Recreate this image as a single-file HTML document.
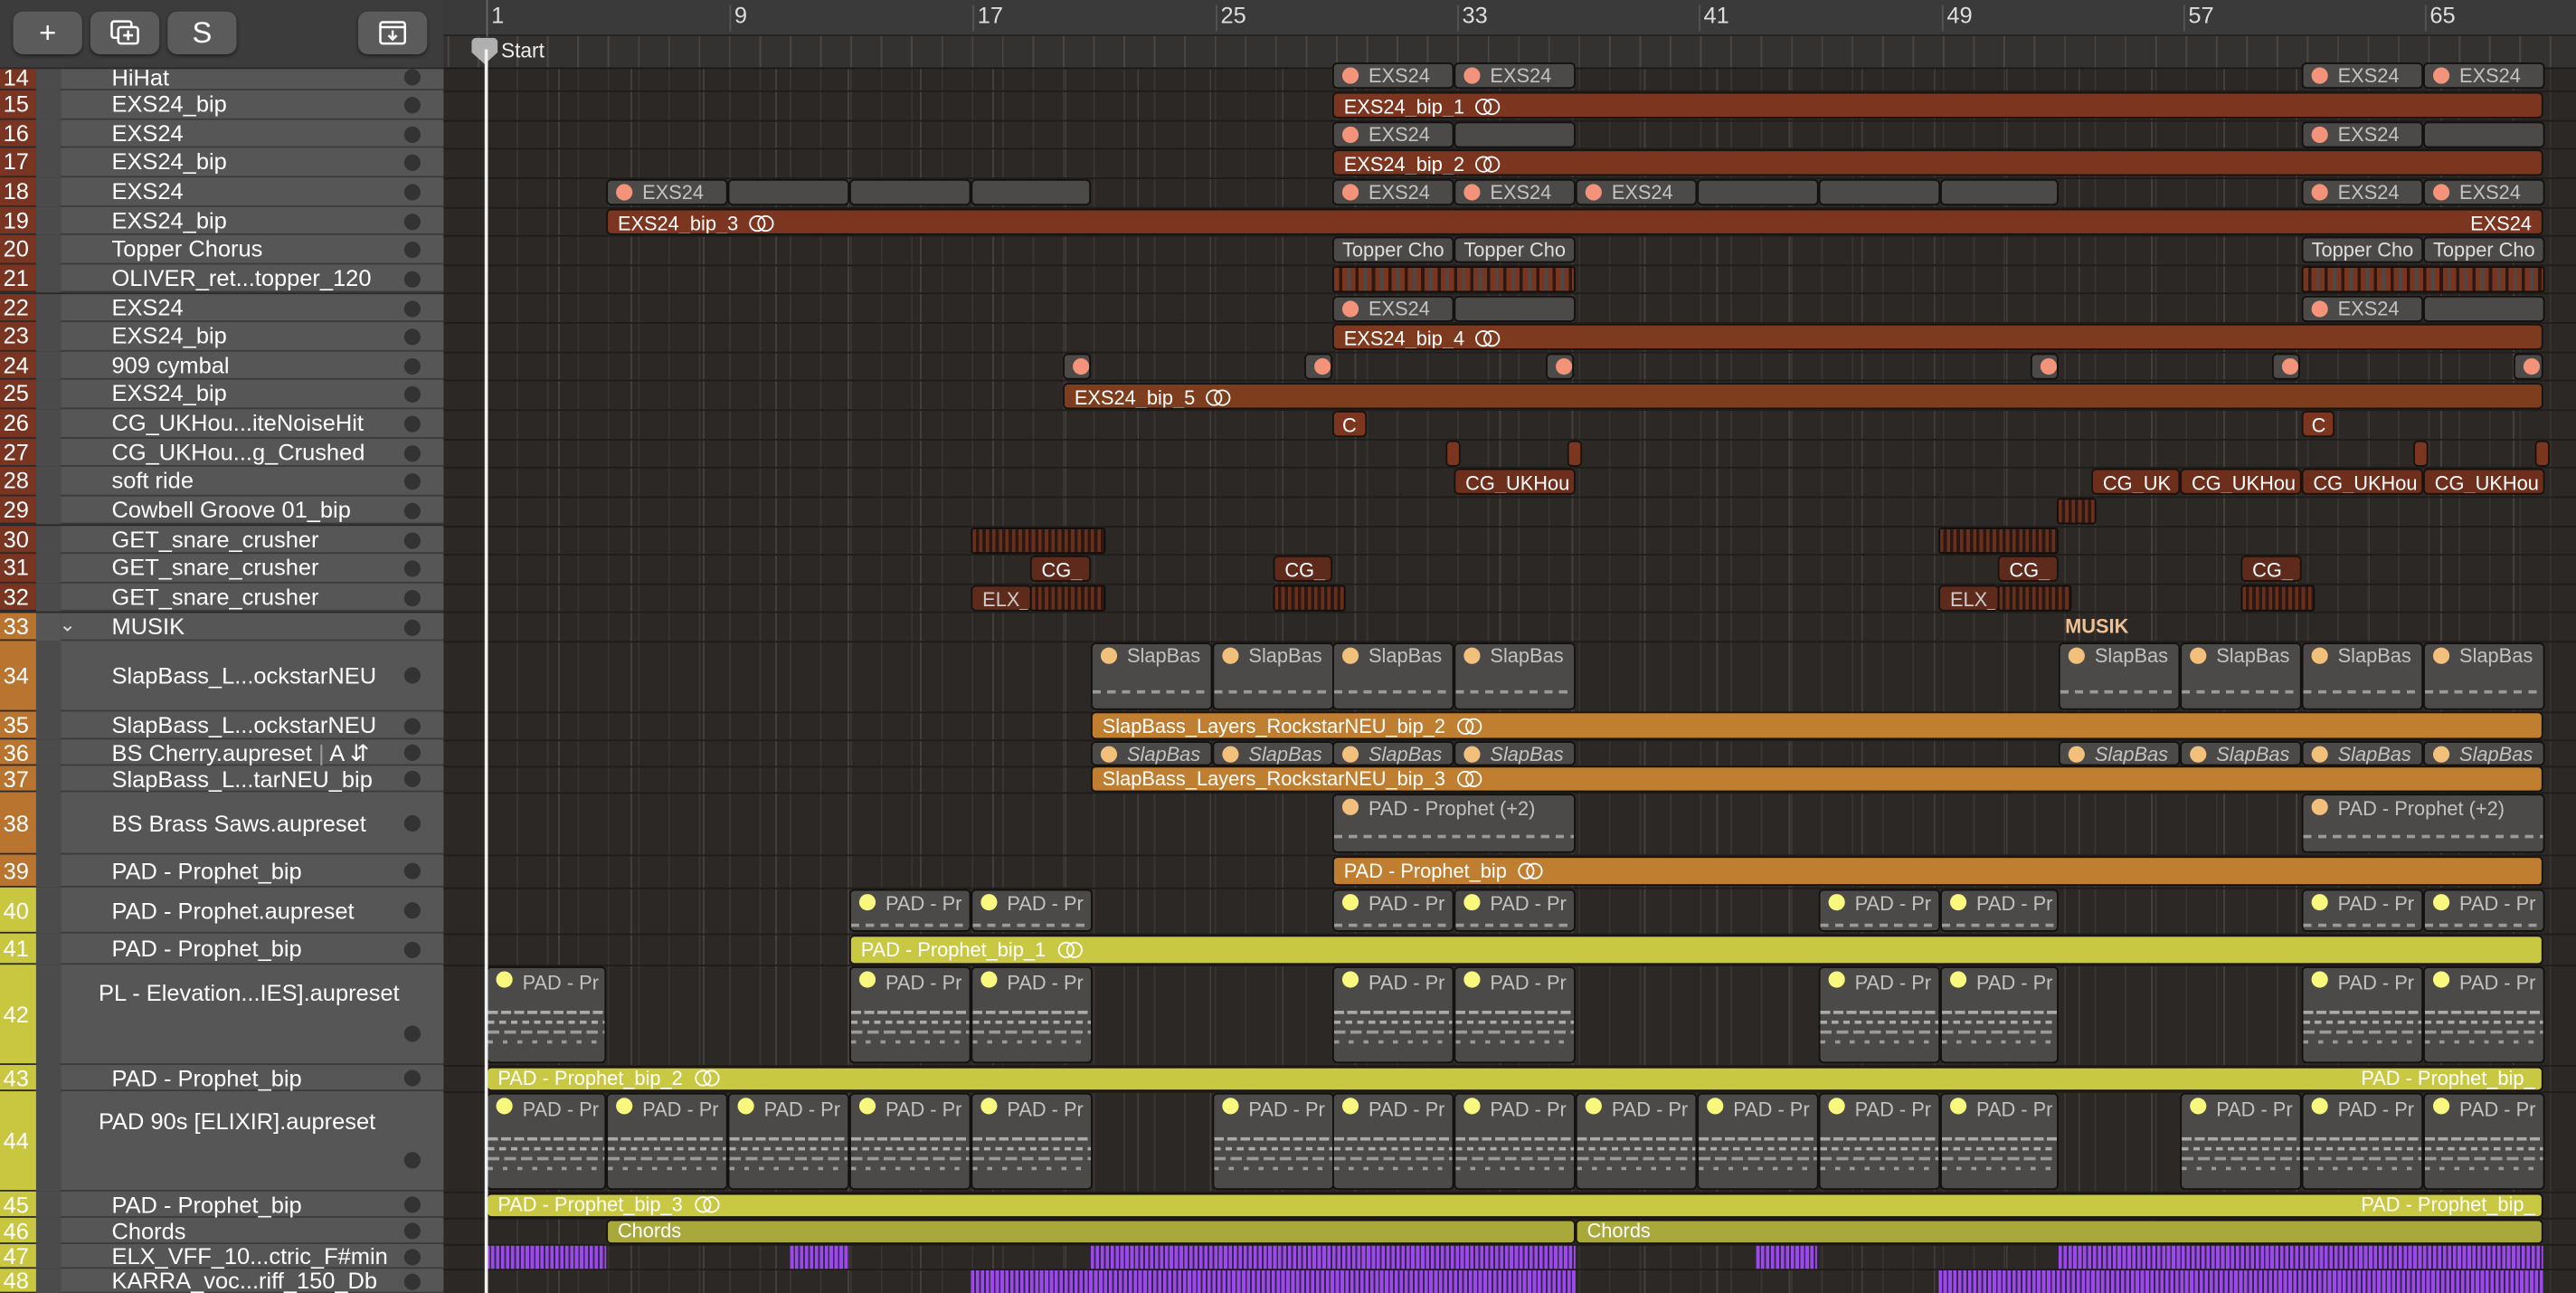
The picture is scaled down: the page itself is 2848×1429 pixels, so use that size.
<!DOCTYPE html>
<html><head><meta charset="utf-8"><style>
html,body{margin:0;padding:0;background:#2c2826;overflow:hidden;width:2848px;height:1428px}
#s{position:absolute;left:0;top:0;width:1568px;height:787px;transform:scale(1.816327);transform-origin:0 0;font-family:"Liberation Sans",sans-serif;overflow:hidden;background:#2c2825}
.a{position:absolute;box-sizing:border-box}
#tl{position:absolute;left:270px;top:42px;width:1298px;height:745px;background:#2c2825;
background-image:repeating-linear-gradient(90deg,transparent 0 25.6px,#45403b 25.6px 26.6px,transparent 26.6px 44.07px);}
.sub{position:absolute;left:296px;top:42px;width:1272px;height:745px;background-image:repeating-linear-gradient(90deg,#3a3531 0 1px,transparent 1px 18.47px)}
.hl{position:absolute;left:270px;width:1298px;height:1px;background:#1f1c1a}
.num{position:absolute;left:0;width:22px;color:#fff;font-size:14px;padding-left:2px;box-sizing:border-box;border-bottom:1px solid #2a2a2a}
.gap{position:absolute;left:22px;width:15px;background:#4b4b4b}
.nm{position:absolute;left:37px;width:233px;background:#565656;border-bottom:1px solid #3b3b3b;box-sizing:border-box;color:#fff;font-size:14px;padding-left:31px;white-space:nowrap}
.nm i{position:absolute;left:209px;width:10px;height:10px;border-radius:50%;background:#333}
.r{position:absolute;box-sizing:border-box;border:1px solid #121110;border-radius:3px;background:#4b4a48;color:#c2c2c2;font-size:12px;overflow:hidden;white-space:nowrap;padding-left:21px;line-height:14px}
.r::before{content:"";position:absolute;left:5px;top:2px;width:10px;height:10px;border-radius:50%;background:var(--d,#f2937a)}
.nd::before{display:none}
.o{--d:#f2c07a}.y{--d:#f8f77e}
.b{position:absolute;box-sizing:border-box;border-radius:3px;color:#fff;font-size:12px;white-space:nowrap;overflow:hidden;padding-left:6px;line-height:16px;border:1px solid #161210}
.br{background:#7c3620}.or{background:#c07e30}.ye{background:#c8c842;color:#3b3b10}.ch{background:#a9a83b;color:#fff}
.lk{display:inline-block;position:relative;width:15px;height:10px;margin-left:7px;vertical-align:-1px}
.lk::before,.lk::after{content:"";position:absolute;top:0;width:8px;height:8px;border:1.3px solid currentColor;border-radius:50%}
.lk::before{left:0}.lk::after{left:5px}
.st{position:absolute;box-sizing:border-box;border:1px solid #120e0c;border-radius:2px;background:repeating-linear-gradient(90deg,#6a2e1c 0 2px,#2a1913 2px 4px)}
.pu{position:absolute;background:repeating-linear-gradient(90deg,#9a4ae8 0 2px,#3a2450 2px 3px)}
.m1{background-image:repeating-linear-gradient(90deg,#9a9a9a 0 5px,transparent 5px 9px);background-size:100% 2px;background-repeat:no-repeat;background-position:0 28px;background-color:#4b4a48}
.m3{background-image:repeating-linear-gradient(90deg,#aaa 0 6px,transparent 6px 8px),repeating-linear-gradient(90deg,#aaa 0 4px,transparent 4px 7px),repeating-linear-gradient(90deg,#999 0 7px,transparent 7px 10px),repeating-linear-gradient(90deg,#999 0 3px,transparent 3px 9px);background-size:100% 2px;background-repeat:no-repeat;background-position:0 26px,0 32px,0 38px,0 44px;background-color:#4b4a48}
.btn{position:absolute;top:7px;height:26px;width:42px;background:#5b5b5b;border-radius:6px;color:#fff;font-size:18px;text-align:center;line-height:26px;box-shadow:0 1px 2px #222}
.rn{position:absolute;top:1px;color:#ddd;font-size:14px}
.tc{background:repeating-linear-gradient(90deg,#7a3520 0 3px,#2a1913 3px 5px,#7a3520 5px 8px,#4b4a48 8px 10px)}
</style></head><body><div id="s">
<div id="tl"></div><div class="sub"></div>
<div class="a" style="left:270px;top:0;width:1298px;height:22px;background:#3a3a3a;border-bottom:1px solid #222"></div>
<div class="a" style="left:270px;top:22px;width:1298px;height:20px;background:#343231;border-bottom:1px solid #1a1a1a;background-image:repeating-linear-gradient(90deg,#4a4643 0 1px,transparent 1px 18.47px);background-position:26px 0"></div>
<div class="a" style="left:296px;top:0;width:1px;height:22px;background:#666"></div>
<div class="rn" style="left:299px">1</div><div class="rn" style="left:447px">9</div><div class="rn" style="left:595px">17</div><div class="rn" style="left:743px">25</div><div class="rn" style="left:890px">33</div><div class="rn" style="left:1037px">41</div><div class="rn" style="left:1185px">49</div><div class="rn" style="left:1332px">57</div><div class="rn" style="left:1479px">65</div>
<div class="a" style="left:444px;top:3px;width:1px;height:16px;background:#555"></div><div class="a" style="left:592px;top:3px;width:1px;height:16px;background:#555"></div><div class="a" style="left:740px;top:3px;width:1px;height:16px;background:#555"></div><div class="a" style="left:887px;top:3px;width:1px;height:16px;background:#555"></div><div class="a" style="left:1034px;top:3px;width:1px;height:16px;background:#555"></div><div class="a" style="left:1182px;top:3px;width:1px;height:16px;background:#555"></div><div class="a" style="left:1329px;top:3px;width:1px;height:16px;background:#555"></div><div class="a" style="left:1476px;top:3px;width:1px;height:16px;background:#555"></div>
<div class="a" style="left:287px;top:23px;width:16px;height:16px;background:#b0b0b0;clip-path:polygon(0 0,100% 0,100% 55%,50% 100%,0 55%);border-radius:3px"></div>
<div class="a" style="left:305px;top:24px;color:#eee;font-size:12.5px">Start</div>
<div class="a" style="left:0;top:0;width:270px;height:42px;background:#3c3c3c;border-bottom:1px solid #2a2a2a"></div>
<div class="btn" style="left:8px">+</div>
<div class="btn" style="left:55px"><svg width="20" height="18" viewBox="0 0 20 18" style="margin-top:4px" fill="none" stroke="#fff" stroke-width="1.4"><rect x="2" y="2" width="12" height="10" rx="1.5"/><rect x="6" y="5.5" width="12" height="10" rx="1.5" fill="#5b5b5b"/><path d="M12 7.5v6M9 10.5h6"/></svg></div>
<div class="btn" style="left:102px">S</div>
<div class="btn" style="left:218px"><svg width="18" height="16" viewBox="0 0 18 16" style="margin-top:5px" fill="none" stroke="#fff" stroke-width="1.4"><rect x="1.5" y="1.5" width="15" height="13" rx="1.5"/><path d="M1.5 4.5h15M9 6.5v5.5M6.5 9.5L9 12l2.5-2.5"/></svg></div>

<div class="num" style="top:42px;height:13px;background:#7a3522;line-height:10px">14</div><div class="gap" style="top:42px;height:13px"></div><div class="nm" style="top:42px;height:13px;line-height:10px">HiHat<i style="top:0px"></i></div>
<div class="num" style="top:55.1px;height:17.6px;background:#7a3522;line-height:17px">15</div><div class="gap" style="top:55.1px;height:17.6px"></div><div class="nm" style="top:55.1px;height:17.6px;line-height:17px">EXS24_bip<i style="top:4px"></i></div>
<div class="num" style="top:72.8px;height:17.6px;background:#7a3522;line-height:17px">16</div><div class="gap" style="top:72.8px;height:17.6px"></div><div class="nm" style="top:72.8px;height:17.6px;line-height:17px">EXS24<i style="top:4px"></i></div>
<div class="num" style="top:90.4px;height:17.6px;background:#7a3522;line-height:17px">17</div><div class="gap" style="top:90.4px;height:17.6px"></div><div class="nm" style="top:90.4px;height:17.6px;line-height:17px">EXS24_bip<i style="top:4px"></i></div>
<div class="num" style="top:108px;height:17.6px;background:#7a3522;line-height:17px">18</div><div class="gap" style="top:108px;height:17.6px"></div><div class="nm" style="top:108px;height:17.6px;line-height:17px">EXS24<i style="top:4px"></i></div>
<div class="num" style="top:125.7px;height:17.6px;background:#7a3522;line-height:17px">19</div><div class="gap" style="top:125.7px;height:17.6px"></div><div class="nm" style="top:125.7px;height:17.6px;line-height:17px">EXS24_bip<i style="top:4px"></i></div>
<div class="num" style="top:143.3px;height:17.6px;background:#7a3522;line-height:17px">20</div><div class="gap" style="top:143.3px;height:17.6px"></div><div class="nm" style="top:143.3px;height:17.6px;line-height:17px">Topper Chorus<i style="top:4px"></i></div>
<div class="num" style="top:160.9px;height:17.6px;background:#7a3522;line-height:17px">21</div><div class="gap" style="top:160.9px;height:17.6px"></div><div class="nm" style="top:160.9px;height:17.6px;line-height:17px">OLIVER_ret...topper_120<i style="top:4px"></i></div>
<div class="num" style="top:178.5px;height:17.6px;background:#7a3522;line-height:17px">22</div><div class="gap" style="top:178.5px;height:17.6px"></div><div class="nm" style="top:178.5px;height:17.6px;line-height:17px">EXS24<i style="top:4px"></i></div>
<div class="num" style="top:196.2px;height:17.6px;background:#7a3522;line-height:17px">23</div><div class="gap" style="top:196.2px;height:17.6px"></div><div class="nm" style="top:196.2px;height:17.6px;line-height:17px">EXS24_bip<i style="top:4px"></i></div>
<div class="num" style="top:213.8px;height:17.6px;background:#7a3522;line-height:17px">24</div><div class="gap" style="top:213.8px;height:17.6px"></div><div class="nm" style="top:213.8px;height:17.6px;line-height:17px">909 cymbal<i style="top:4px"></i></div>
<div class="num" style="top:231.4px;height:17.6px;background:#7a3522;line-height:17px">25</div><div class="gap" style="top:231.4px;height:17.6px"></div><div class="nm" style="top:231.4px;height:17.6px;line-height:17px">EXS24_bip<i style="top:4px"></i></div>
<div class="num" style="top:249.1px;height:17.6px;background:#7a3522;line-height:17px">26</div><div class="gap" style="top:249.1px;height:17.6px"></div><div class="nm" style="top:249.1px;height:17.6px;line-height:17px">CG_UKHou...iteNoiseHit<i style="top:4px"></i></div>
<div class="num" style="top:266.7px;height:17.6px;background:#7a3522;line-height:17px">27</div><div class="gap" style="top:266.7px;height:17.6px"></div><div class="nm" style="top:266.7px;height:17.6px;line-height:17px">CG_UKHou...g_Crushed<i style="top:4px"></i></div>
<div class="num" style="top:284.3px;height:17.6px;background:#7a3522;line-height:17px">28</div><div class="gap" style="top:284.3px;height:17.6px"></div><div class="nm" style="top:284.3px;height:17.6px;line-height:17px">soft ride<i style="top:4px"></i></div>
<div class="num" style="top:301.9px;height:17.6px;background:#7a3522;line-height:17px">29</div><div class="gap" style="top:301.9px;height:17.6px"></div><div class="nm" style="top:301.9px;height:17.6px;line-height:17px">Cowbell Groove 01_bip<i style="top:4px"></i></div>
<div class="num" style="top:319.6px;height:17.6px;background:#7a3522;line-height:17px">30</div><div class="gap" style="top:319.6px;height:17.6px"></div><div class="nm" style="top:319.6px;height:17.6px;line-height:17px">GET_snare_crusher<i style="top:4px"></i></div>
<div class="num" style="top:337.2px;height:17.6px;background:#7a3522;line-height:17px">31</div><div class="gap" style="top:337.2px;height:17.6px"></div><div class="nm" style="top:337.2px;height:17.6px;line-height:17px">GET_snare_crusher<i style="top:4px"></i></div>
<div class="num" style="top:354.8px;height:17.6px;background:#7a3522;line-height:17px">32</div><div class="gap" style="top:354.8px;height:17.6px"></div><div class="nm" style="top:354.8px;height:17.6px;line-height:17px">GET_snare_crusher<i style="top:4px"></i></div>
<div class="num" style="top:372.5px;height:17.5px;background:#b97430;line-height:17px">33</div><div class="gap" style="top:372.5px;height:17.5px;background:#565656"></div><div class="nm" style="top:372.5px;height:17.5px;line-height:17px">MUSIK<i style="top:4px"></i></div>
<div class="a" style="left:36px;top:373px;color:#ddd;font-size:12px">&#8964;</div>
<div class="num" style="top:390px;height:43px;background:#b97430;line-height:43px">34</div><div class="gap" style="top:390px;height:43px"></div><div class="nm" style="top:390px;height:43px;line-height:43px">SlapBass_L...ockstarNEU<i style="top:16px"></i></div>
<div class="num" style="top:433px;height:17px;background:#b97430;line-height:17px">35</div><div class="gap" style="top:433px;height:17px"></div><div class="nm" style="top:433px;height:17px;line-height:17px">SlapBass_L...ockstarNEU<i style="top:4px"></i></div>
<div class="num" style="top:450px;height:16px;background:#b97430;line-height:16px">36</div><div class="gap" style="top:450px;height:16px"></div><div class="nm" style="top:450px;height:16px;line-height:16px">BS Cherry.aupreset <span style="color:#999">|</span> A &#8693;<i style="top:3px"></i></div>
<div class="num" style="top:466px;height:16px;background:#b97430;line-height:16px">37</div><div class="gap" style="top:466px;height:16px"></div><div class="nm" style="top:466px;height:16px;line-height:16px">SlapBass_L...tarNEU_bip<i style="top:3px"></i></div>
<div class="num" style="top:482px;height:38px;background:#b97430;line-height:38px">38</div><div class="gap" style="top:482px;height:38px"></div><div class="nm" style="top:482px;height:38px;line-height:38px">BS Brass Saws.aupreset<i style="top:14px"></i></div>
<div class="num" style="top:520px;height:20px;background:#b97430;line-height:20px">39</div><div class="gap" style="top:520px;height:20px"></div><div class="nm" style="top:520px;height:20px;line-height:20px">PAD - Prophet_bip<i style="top:5px"></i></div>
<div class="num" style="top:540px;height:28px;background:#c9c640;line-height:28px">40</div><div class="gap" style="top:540px;height:28px"></div><div class="nm" style="top:540px;height:28px;line-height:28px">PAD - Prophet.aupreset<i style="top:9px"></i></div>
<div class="num" style="top:568px;height:19px;background:#c9c640;line-height:19px">41</div><div class="gap" style="top:568px;height:19px"></div><div class="nm" style="top:568px;height:19px;line-height:19px">PAD - Prophet_bip<i style="top:5px"></i></div>
<div class="num" style="top:587px;height:61px;background:#c9c640;line-height:61px">42</div><div class="gap" style="top:587px;height:61px"></div><div class="nm" style="top:587px;height:61px;line-height:34px;padding-left:23px">PL - Elevation...IES].aupreset<i style="top:37px"></i></div>
<div class="num" style="top:648px;height:16px;background:#c9c640;line-height:16px">43</div><div class="gap" style="top:648px;height:16px"></div><div class="nm" style="top:648px;height:16px;line-height:16px">PAD - Prophet_bip<i style="top:3px"></i></div>
<div class="num" style="top:664px;height:61px;background:#c9c640;line-height:61px">44</div><div class="gap" style="top:664px;height:61px"></div><div class="nm" style="top:664px;height:61px;line-height:36px;padding-left:23px">PAD 90s [ELIXIR].aupreset<i style="top:37px"></i></div>
<div class="num" style="top:725px;height:16px;background:#c9c640;line-height:16px">45</div><div class="gap" style="top:725px;height:16px"></div><div class="nm" style="top:725px;height:16px;line-height:16px">PAD - Prophet_bip<i style="top:3px"></i></div>
<div class="num" style="top:741px;height:16px;background:#c9c640;line-height:16px">46</div><div class="gap" style="top:741px;height:16px"></div><div class="nm" style="top:741px;height:16px;line-height:16px">Chords<i style="top:3px"></i></div>
<div class="num" style="top:757px;height:15px;background:#c9c640;line-height:15px">47</div><div class="gap" style="top:757px;height:15px"></div><div class="nm" style="top:757px;height:15px;line-height:15px">ELX_VFF_10...ctric_F#min<i style="top:3px"></i></div>
<div class="num" style="top:772px;height:15px;background:#c9c640;line-height:15px">48</div><div class="gap" style="top:772px;height:15px"></div><div class="nm" style="top:772px;height:15px;line-height:15px">KARRA_voc...riff_150_Db<i style="top:3px"></i></div>

<div class="hl" style="top:55px"></div><div class="hl" style="top:72.7px"></div><div class="hl" style="top:90.3px"></div><div class="hl" style="top:108px"></div><div class="hl" style="top:125.6px"></div><div class="hl" style="top:143.2px"></div><div class="hl" style="top:160.8px"></div><div class="hl" style="top:178.4px"></div><div class="hl" style="top:196.1px"></div><div class="hl" style="top:213.7px"></div><div class="hl" style="top:231.3px"></div><div class="hl" style="top:249px"></div><div class="hl" style="top:266.6px"></div><div class="hl" style="top:284.2px"></div><div class="hl" style="top:301.8px"></div><div class="hl" style="top:319.5px"></div><div class="hl" style="top:337.1px"></div><div class="hl" style="top:354.7px"></div><div class="hl" style="top:372.4px"></div><div class="hl" style="top:390px"></div><div class="hl" style="top:433px"></div><div class="hl" style="top:450px"></div><div class="hl" style="top:466px"></div><div class="hl" style="top:482px"></div><div class="hl" style="top:520px"></div><div class="hl" style="top:540px"></div><div class="hl" style="top:568px"></div><div class="hl" style="top:587px"></div><div class="hl" style="top:648px"></div><div class="hl" style="top:664px"></div><div class="hl" style="top:725px"></div><div class="hl" style="top:741px"></div><div class="hl" style="top:757px"></div><div class="hl" style="top:772px"></div>

<div class="r" style="left:811px;top:38px;width:74px;height:16px">EXS24</div><div class="r" style="left:885px;top:38px;width:74px;height:16px">EXS24</div><div class="r" style="left:1401px;top:38px;width:74px;height:16px">EXS24</div><div class="r" style="left:1475px;top:38px;width:74px;height:16px">EXS24</div>
<div class="b br" style="left:811px;top:56px;width:737px;height:16px">EXS24_bip_1<span class="lk"></span></div>
<div class="r" style="left:811px;top:73.5px;width:74px;height:16px">EXS24</div><div class="r nd" style="left:885px;top:73.5px;width:74px;height:16px"></div><div class="r" style="left:1401px;top:73.5px;width:74px;height:16px">EXS24</div><div class="r nd" style="left:1475px;top:73.5px;width:74px;height:16px"></div>
<div class="b br" style="left:811px;top:91px;width:737px;height:16px">EXS24_bip_2<span class="lk"></span></div>
<div class="r" style="left:369px;top:109px;width:74px;height:16px">EXS24</div><div class="r nd" style="left:443px;top:109px;width:74px;height:16px"></div><div class="r nd" style="left:517px;top:109px;width:74px;height:16px"></div><div class="r nd" style="left:591px;top:109px;width:73px;height:16px"></div>
<div class="r" style="left:811px;top:109px;width:74px;height:16px">EXS24</div><div class="r" style="left:885px;top:109px;width:74px;height:16px">EXS24</div><div class="r" style="left:959px;top:109px;width:74px;height:16px">EXS24</div><div class="r nd" style="left:1033px;top:109px;width:74px;height:16px"></div><div class="r nd" style="left:1107px;top:109px;width:74px;height:16px"></div><div class="r nd" style="left:1181px;top:109px;width:72px;height:16px"></div>
<div class="r" style="left:1401px;top:109px;width:74px;height:16px">EXS24</div><div class="r" style="left:1475px;top:109px;width:74px;height:16px">EXS24</div>
<div class="b br" style="left:369px;top:126.5px;width:1179px;height:16px">EXS24_bip_3<span class="lk"></span><span style="position:absolute;right:6px">EXS24</span></div>
<div class="r nd" style="left:811px;top:144px;width:74px;height:16px;padding-left:5px;color:#ddd">Topper Cho</div><div class="r nd" style="left:885px;top:144px;width:74px;height:16px;padding-left:5px;color:#ddd">Topper Cho</div><div class="r nd" style="left:1401px;top:144px;width:74px;height:16px;padding-left:5px;color:#ddd">Topper Cho</div><div class="r nd" style="left:1475px;top:144px;width:74px;height:16px;padding-left:5px;color:#ddd">Topper Cho</div>
<div class="st tc" style="left:811px;top:162px;width:148px;height:16px"></div>
<div class="st tc" style="left:1401px;top:162px;width:148px;height:16px"></div>
<div class="r" style="left:811px;top:179.5px;width:74px;height:16px">EXS24</div><div class="r nd" style="left:885px;top:179.5px;width:74px;height:16px"></div><div class="r" style="left:1401px;top:179.5px;width:74px;height:16px">EXS24</div><div class="r nd" style="left:1475px;top:179.5px;width:74px;height:16px"></div>
<div class="b br" style="left:811px;top:197px;width:737px;height:16px;background:#7e3a1e">EXS24_bip_4<span class="lk"></span></div>
<div class="r" style="left:647px;top:215px;width:17px;height:16px;padding:0"></div><div class="r" style="left:794px;top:215px;width:17px;height:16px;padding:0"></div><div class="r" style="left:941px;top:215px;width:17px;height:16px;padding:0"></div><div class="r" style="left:1236px;top:215px;width:17px;height:16px;padding:0"></div><div class="r" style="left:1383px;top:215px;width:17px;height:16px;padding:0"></div><div class="r" style="left:1530px;top:215px;width:18px;height:16px;padding:0"></div>
<div class="b br" style="left:647px;top:232.5px;width:901px;height:16px;background:#7e3e1e">EXS24_bip_5<span class="lk"></span></div>
<div class="b br" style="left:811px;top:250px;width:21px;height:16px;padding-left:5px">C</div><div class="b br" style="left:1401px;top:250px;width:20px;height:16px;padding-left:5px">C</div>
<div class="b br" style="left:880px;top:267.5px;width:9px;height:16px"></div><div class="b br" style="left:954px;top:267.5px;width:9px;height:16px"></div><div class="b br" style="left:1469px;top:267.5px;width:9px;height:16px"></div><div class="b br" style="left:1543px;top:267.5px;width:9px;height:16px"></div>
<div class="b br" style="left:885px;top:285px;width:74px;height:16px;background:#6d2e1c">CG_UKHou</div>
<div class="b br" style="left:1273px;top:285px;width:54px;height:16px;background:#6d2e1c">CG_UK</div><div class="b br" style="left:1327px;top:285px;width:74px;height:16px;background:#6d2e1c">CG_UKHou</div><div class="b br" style="left:1401px;top:285px;width:74px;height:16px;background:#6d2e1c">CG_UKHou</div><div class="b br" style="left:1475px;top:285px;width:74px;height:16px;background:#6d2e1c">CG_UKHou</div>
<div class="st" style="left:1252px;top:303px;width:24px;height:16px"></div>
<div class="st" style="left:591px;top:320.5px;width:82px;height:16px"></div><div class="st" style="left:1180px;top:320.5px;width:73px;height:16px"></div>
<div class="b br" style="left:627px;top:338px;width:37px;height:16px;background:#5e2a1c">CG_</div><div class="b br" style="left:775px;top:338px;width:36px;height:16px;background:#5e2a1c">CG_</div><div class="b br" style="left:1216px;top:338px;width:37px;height:16px;background:#5e2a1c">CG_</div><div class="b br" style="left:1364px;top:338px;width:37px;height:16px;background:#5e2a1c">CG_</div>
<div class="b br" style="left:591px;top:355.5px;width:37px;height:16px;background:#5e2a1c;color:#ccc">ELX_</div><div class="st" style="left:627px;top:355.5px;width:46px;height:16px"></div><div class="st" style="left:775px;top:355.5px;width:44px;height:16px"></div>
<div class="b br" style="left:1180px;top:355.5px;width:37px;height:16px;background:#5e2a1c;color:#ccc">ELX_</div><div class="st" style="left:1216px;top:355.5px;width:45px;height:16px"></div><div class="st" style="left:1364px;top:355.5px;width:45px;height:16px"></div>
<div class="a" style="left:1257px;top:374px;color:#f0c090;font-size:12px;font-weight:bold">MUSIK</div>
<div class="r o m1" style="left:664px;top:391px;width:74px;height:41px">SlapBas</div><div class="r o m1" style="left:738px;top:391px;width:74px;height:41px">SlapBas</div><div class="r o m1" style="left:811px;top:391px;width:74px;height:41px">SlapBas</div><div class="r o m1" style="left:885px;top:391px;width:74px;height:41px">SlapBas</div>
<div class="r o m1" style="left:1253px;top:391px;width:74px;height:41px">SlapBas</div><div class="r o m1" style="left:1327px;top:391px;width:74px;height:41px">SlapBas</div><div class="r o m1" style="left:1401px;top:391px;width:74px;height:41px">SlapBas</div><div class="r o m1" style="left:1475px;top:391px;width:74px;height:41px">SlapBas</div>
<div class="b or" style="left:664px;top:433px;width:884px;height:17px">SlapBass_Layers_RockstarNEU_bip_2<span class="lk"></span></div>
<div class="r o" style="left:664px;top:450.5px;width:74px;height:15px;font-style:italic">SlapBas</div><div class="r o" style="left:738px;top:450.5px;width:74px;height:15px;font-style:italic">SlapBas</div><div class="r o" style="left:811px;top:450.5px;width:74px;height:15px;font-style:italic">SlapBas</div><div class="r o" style="left:885px;top:450.5px;width:74px;height:15px;font-style:italic">SlapBas</div>
<div class="r o" style="left:1253px;top:450.5px;width:74px;height:15px;font-style:italic">SlapBas</div><div class="r o" style="left:1327px;top:450.5px;width:74px;height:15px;font-style:italic">SlapBas</div><div class="r o" style="left:1401px;top:450.5px;width:74px;height:15px;font-style:italic">SlapBas</div><div class="r o" style="left:1475px;top:450.5px;width:74px;height:15px;font-style:italic">SlapBas</div>
<div class="b or" style="left:664px;top:466px;width:884px;height:16px;line-height:14px">SlapBass_Layers_RockstarNEU_bip_3<span class="lk"></span></div>
<div class="r o m1" style="left:811px;top:483px;width:148px;height:36px;line-height:16px;background-position:0 24px">PAD - Prophet (+2)</div><div class="r o m1" style="left:1401px;top:483px;width:148px;height:36px;line-height:16px;background-position:0 24px">PAD - Prophet (+2)</div>
<div class="b or" style="left:811px;top:521px;width:737px;height:18px;line-height:16px">PAD - Prophet_bip<span class="lk"></span></div>
<div class="r y m1" style="left:517px;top:541px;width:74px;height:26px;line-height:16px;background-position:0 20px">PAD - Pr</div><div class="r y m1" style="left:591px;top:541px;width:74px;height:26px;line-height:16px;background-position:0 20px">PAD - Pr</div>
<div class="r y m1" style="left:811px;top:541px;width:74px;height:26px;line-height:16px;background-position:0 20px">PAD - Pr</div><div class="r y m1" style="left:885px;top:541px;width:74px;height:26px;line-height:16px;background-position:0 20px">PAD - Pr</div>
<div class="r y m1" style="left:1107px;top:541px;width:74px;height:26px;line-height:16px;background-position:0 20px">PAD - Pr</div><div class="r y m1" style="left:1181px;top:541px;width:72px;height:26px;line-height:16px;background-position:0 20px">PAD - Pr</div>
<div class="r y m1" style="left:1401px;top:541px;width:74px;height:26px;line-height:16px;background-position:0 20px">PAD - Pr</div><div class="r y m1" style="left:1475px;top:541px;width:74px;height:26px;line-height:16px;background-position:0 20px">PAD - Pr</div>
<div class="b ye" style="left:517px;top:569px;width:1031px;height:18px;color:#fff">PAD - Prophet_bip_1<span class="lk"></span></div>
<div class="r y m3" style="left:296px;top:588px;width:73px;height:59px;line-height:18px">PAD - Pr</div>
<div class="r y m3" style="left:517px;top:588px;width:74px;height:59px;line-height:18px">PAD - Pr</div><div class="r y m3" style="left:591px;top:588px;width:74px;height:59px;line-height:18px">PAD - Pr</div>
<div class="r y m3" style="left:811px;top:588px;width:74px;height:59px;line-height:18px">PAD - Pr</div><div class="r y m3" style="left:885px;top:588px;width:74px;height:59px;line-height:18px">PAD - Pr</div>
<div class="r y m3" style="left:1107px;top:588px;width:74px;height:59px;line-height:18px">PAD - Pr</div><div class="r y m3" style="left:1181px;top:588px;width:72px;height:59px;line-height:18px">PAD - Pr</div>
<div class="r y m3" style="left:1401px;top:588px;width:74px;height:59px;line-height:18px">PAD - Pr</div><div class="r y m3" style="left:1475px;top:588px;width:74px;height:59px;line-height:18px">PAD - Pr</div>
<div class="b ye" style="left:296px;top:649px;width:1252px;height:15px;line-height:13px;color:#fff">PAD - Prophet_bip_2<span class="lk"></span><span style="position:absolute;right:4px">PAD - Prophet_bip_</span></div>
<div class="r y m3" style="left:296px;top:665px;width:73px;height:59px;line-height:18px">PAD - Pr</div><div class="r y m3" style="left:369px;top:665px;width:74px;height:59px;line-height:18px">PAD - Pr</div><div class="r y m3" style="left:443px;top:665px;width:74px;height:59px;line-height:18px">PAD - Pr</div><div class="r y m3" style="left:517px;top:665px;width:74px;height:59px;line-height:18px">PAD - Pr</div><div class="r y m3" style="left:591px;top:665px;width:74px;height:59px;line-height:18px">PAD - Pr</div>
<div class="r y m3" style="left:738px;top:665px;width:74px;height:59px;line-height:18px">PAD - Pr</div><div class="r y m3" style="left:811px;top:665px;width:74px;height:59px;line-height:18px">PAD - Pr</div><div class="r y m3" style="left:885px;top:665px;width:74px;height:59px;line-height:18px">PAD - Pr</div><div class="r y m3" style="left:959px;top:665px;width:74px;height:59px;line-height:18px">PAD - Pr</div><div class="r y m3" style="left:1033px;top:665px;width:74px;height:59px;line-height:18px">PAD - Pr</div><div class="r y m3" style="left:1107px;top:665px;width:74px;height:59px;line-height:18px">PAD - Pr</div><div class="r y m3" style="left:1181px;top:665px;width:72px;height:59px;line-height:18px">PAD - Pr</div>
<div class="r y m3" style="left:1327px;top:665px;width:74px;height:59px;line-height:18px">PAD - Pr</div><div class="r y m3" style="left:1401px;top:665px;width:74px;height:59px;line-height:18px">PAD - Pr</div><div class="r y m3" style="left:1475px;top:665px;width:74px;height:59px;line-height:18px">PAD - Pr</div>
<div class="b ye" style="left:296px;top:726px;width:1252px;height:15px;line-height:13px;color:#fff">PAD - Prophet_bip_3<span class="lk"></span><span style="position:absolute;right:4px">PAD - Prophet_bip_</span></div>
<div class="b ch" style="left:369px;top:741.5px;width:590px;height:15px;line-height:13px">Chords</div><div class="b ch" style="left:959px;top:741.5px;width:589px;height:15px;line-height:13px">Chords</div>
<div class="pu" style="left:296px;top:758px;width:73px;height:14px"></div><div class="pu" style="left:481px;top:758px;width:35px;height:14px"></div><div class="pu" style="left:664px;top:758px;width:295px;height:14px"></div><div class="pu" style="left:1069px;top:758px;width:37px;height:14px"></div><div class="pu" style="left:1253px;top:758px;width:295px;height:14px"></div>
<div class="pu" style="left:591px;top:773px;width:368px;height:14px"></div><div class="pu" style="left:1180px;top:773px;width:368px;height:14px"></div>
<div class="a" style="left:295px;top:30px;width:1.5px;height:757px;background:#f0f0f0"></div>
</div></body></html>
